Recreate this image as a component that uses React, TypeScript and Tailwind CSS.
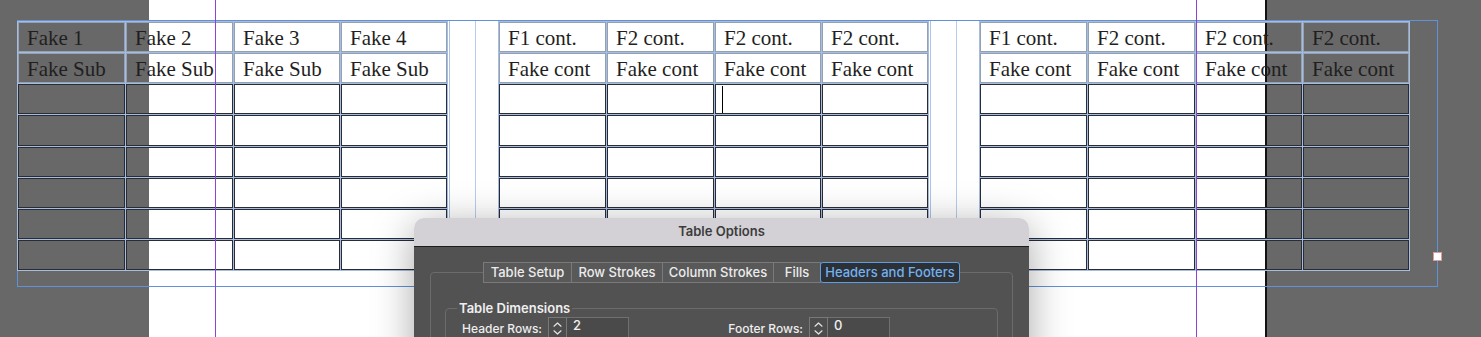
import React from 'react';

type Group = {
  head: string[];
  sub: string[];
  cursorCol?: number;
};

const groups: Group[] = [
  { head: ['Fake 1', 'Fake 2', 'Fake 3', 'Fake 4'], sub: ['Fake Sub', 'Fake Sub', 'Fake Sub', 'Fake Sub'] },
  {
    head: ['F1 cont.', 'F2 cont.', 'F2 cont.', 'F2 cont.'],
    sub: ['Fake cont', 'Fake cont', 'Fake cont', 'Fake cont'],
    cursorCol: 2,
  },
  { head: ['F1 cont.', 'F2 cont.', 'F2 cont.', 'F2 cont.'], sub: ['Fake cont', 'Fake cont', 'Fake cont', 'Fake cont'] },
];

const tabs = [
  { label: 'Table Setup', w: 'w-[89px]' },
  { label: 'Row Strokes', w: 'w-[92px]' },
  { label: 'Column Strokes', w: 'w-[112px]' },
  { label: 'Fills', w: 'w-[48px]' },
  { label: 'Headers and Footers', w: 'w-[140px]', active: true },
];

function Cell({ text, head, cursor }: { text?: string; head?: boolean; cursor?: boolean }) {
  return (
    <div
      className={`${
        head ? 'border-[#93a1b6]' : 'border-[#272c37]'
      } border outline outline-1 outline-[#a8bcdc] flex items-center pl-[8px] pt-[2px] text-[21px] leading-[28px] text-[#1f1f1f] whitespace-nowrap overflow-visible`}
    >
      {text}
      {cursor && <div className="w-px h-[27px] bg-black -ml-[2px] -mt-[2px]" />}
    </div>
  );
}

function Table({ group }: { group: Group }) {
  return (
    <div className="grid grid-cols-[107px_107px_106px_106px] grid-rows-[30px_30px_30px_31px_30px_30px_30px_30px] gap-px shrink-0">
      {group.head.map((t, i) => (
        <Cell key={`h${i}`} text={t} head />
      ))}
      {group.sub.map((t, i) => (
        <Cell key={`s${i}`} text={t} head />
      ))}
      {Array.from({ length: 24 }).map((_, i) => (
        <Cell key={`b${i}`} cursor={group.cursorCol !== undefined && i === group.cursorCol} />
      ))}
    </div>
  );
}

function Stepper() {
  return (
    <div className="w-[19px] h-[22px] shrink-0 border border-[#787878] bg-[#4d4d4d] flex flex-col items-center justify-center gap-[3px]">
      <svg width="9" height="5" viewBox="0 0 9 5" fill="none">
        <path d="M1 4.2 4.5 1 8 4.2" stroke="#e4e4e4" strokeWidth="1.2" strokeLinecap="round" strokeLinejoin="round" />
      </svg>
      <svg width="9" height="5" viewBox="0 0 9 5" fill="none">
        <path d="M1 0.8 4.5 4 8 0.8" stroke="#e4e4e4" strokeWidth="1.2" strokeLinecap="round" strokeLinejoin="round" />
      </svg>
    </div>
  );
}

function NumberField({ value }: { value: string }) {
  return (
    <div className="w-[62px] h-[22px] shrink-0 border border-[#6f6f6f] border-l-0 bg-[#4a4a4a] pl-[6px] text-[13px] leading-[14px] font-medium text-[#f0f0f0]">
      {value}
    </div>
  );
}

export default function App() {
  return (
    <div className="relative w-[1481px] h-[337px] overflow-hidden bg-[#686868] flex">
      <div className="w-[149px] shrink-0" />
      <div className="w-[1118px] shrink-0 bg-white border-r-2 border-[#121212]" />

      {/* text frame with the split table */}
      <div className="absolute left-[17px] top-[20px] w-[1421px] h-[267px] border border-[#5f92da] font-['Liberation_Serif',serif]">
        <div className="flex gap-[52px] mt-px">
          {groups.map((g, i) => (
            <Table key={i} group={g} />
          ))}
        </div>
        <div className="absolute top-0 bottom-0 left-[431px] w-px bg-[#a9c3ea]" />
        <div className="absolute top-0 bottom-0 left-[457px] w-px bg-[#b6cdee]" />
        <div className="absolute top-0 bottom-0 left-[912px] w-px bg-[#a9c3ea]" />
        <div className="absolute top-0 bottom-0 left-[938px] w-px bg-[#b6cdee]" />
        <div className="absolute -right-[5px] top-[231px] w-[9px] h-[9px] bg-white border border-[#dc9d9d]" />
      </div>

      {/* margin guides */}
      <div className="absolute top-0 bottom-0 left-[215px] w-px bg-[#8c44d6]" />
      <div className="absolute top-0 bottom-0 left-[1196px] w-px bg-[#8c44d6]" />

      {/* dialog */}
      <div className="absolute left-[414px] top-[218px] w-[615px] h-[160px] rounded-t-[10px] overflow-hidden shadow-[0_8px_40px_rgba(0,0,0,0.35)] font-['Inter',sans-serif]">
        <div className="h-[29px] bg-[#d3d1d5] border-b border-[#1d1d1d] flex items-center justify-center text-[13px] font-semibold text-[#3c3c3c]">
          Table Options
        </div>
        <div className="h-full bg-[#525252] pt-[25px] px-4">
          <div className="border border-[#6b6b6b] rounded-[4px] h-[120px]">
            <div className="flex justify-center -mt-[11px]">
              {tabs.map((t, i) => (
                <div
                  key={t.label}
                  className={`${t.w} ${i > 0 ? '-ml-px' : ''} ${
                    t.active
                      ? 'relative z-10 bg-[#2d3034] border-[#5d9ee3] text-[#72b2f0] rounded-[3px]'
                      : 'bg-[#595959] border-[#7a7a7a] text-[#ececec]'
                  } h-[21px] border flex items-center justify-center text-[13px] font-medium whitespace-nowrap`}
                >
                  {t.label}
                </div>
              ))}
            </div>
            <div className="mx-[14px] mt-[25px] border border-[#6b6b6b] rounded-[4px] h-[80px]">
              <div className="-mt-[9px] ml-[11px] px-[2px] w-fit bg-[#525252] text-[13px] leading-[16px] font-semibold text-[#efefef] whitespace-nowrap">
                Table Dimensions
              </div>
              <div className="flex items-start mt-[1px] pl-[14px] text-[12px] font-medium text-[#eeeeee] whitespace-nowrap">
                <div className="w-[88px] text-right pt-[3px] pr-[6px]">Header Rows:</div>
                <Stepper />
                <NumberField value="2" />
                <div className="w-[94px] ml-[86px] text-right pt-[3px] pr-[6px]">Footer Rows:</div>
                <Stepper />
                <NumberField value="0" />
              </div>
            </div>
          </div>
        </div>
      </div>
    </div>
  );
}
